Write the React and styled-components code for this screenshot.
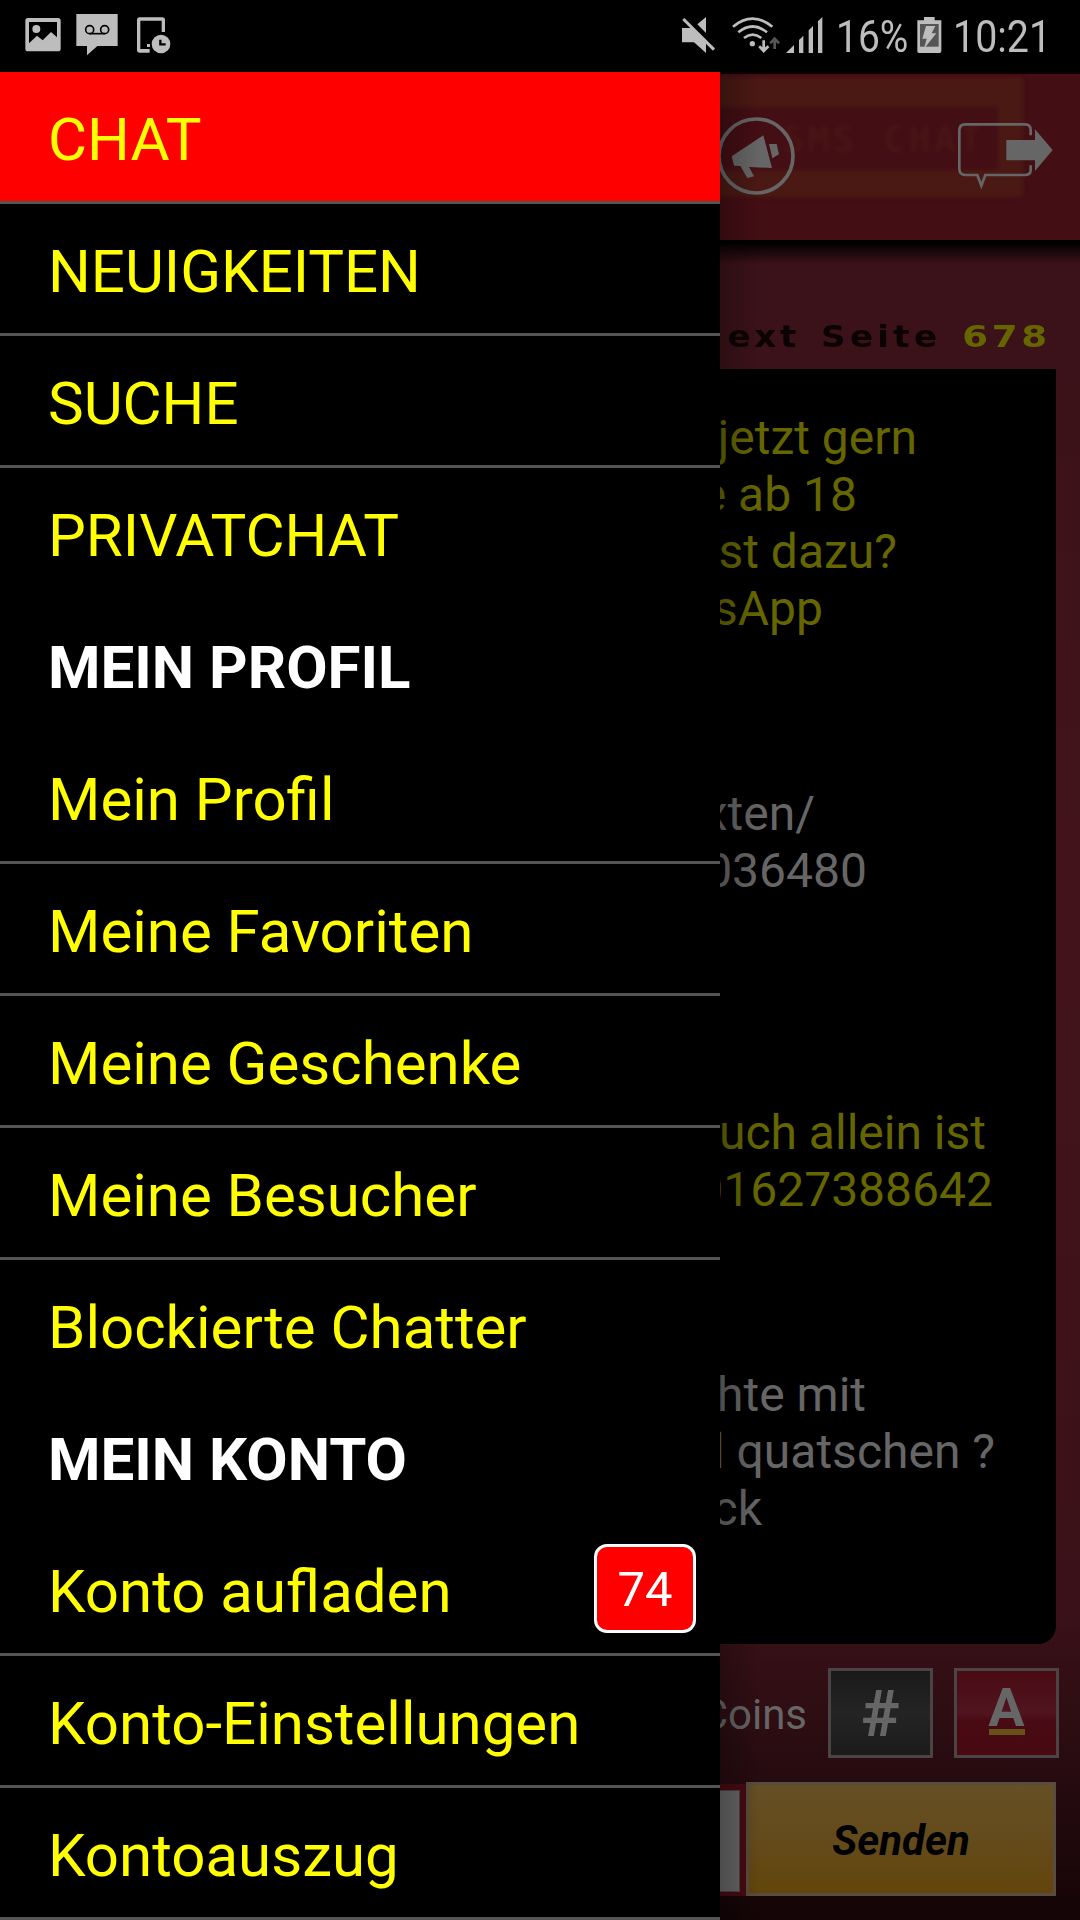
import React from 'react';
import styled, { createGlobalStyle } from 'styled-components';

const GlobalStyle = createGlobalStyle`
  body {
    margin: 0;
    background: #000;
    font-family: Roboto, sans-serif;
  }
  * {
    box-sizing: border-box;
  }
`;

//phone screen
const Screen = styled.div`
  position: relative;
  display: flex;
  flex-direction: column;
  width: 1080px;
  height: 1920px;
  overflow: hidden;
  background: #000;
`;

//android status bar
const StatusBar = styled.div`
  display: flex;
  justify-content: space-between;
  flex: none;
  height: 72px;
  background: #000;
`;

const StatusRight = styled.div`
  display: flex;
`;

const StatusText = styled.div`
  width: ${props => props.$width}px;
  line-height: 74px;
  font-size: 45px;
  color: #bdbdbd;
  white-space: nowrap;

  span {
    display: inline-block;
    transform: scaleX(${props => props.$squeeze});
    transform-origin: left;
  }
`;

//chat page behind the menu
const Page = styled.div`
  display: flex;
  flex-direction: column;
  flex: 1;
  background: linear-gradient(#3a1219 0, #3b1219 250px, #42131a 800px, #3f1219 1250px, #3a1118 1540px, #2b0d12 1660px, #1f080c 1770px, #130406 1848px);
`;

const Header = styled.div`
  position: relative;
  display: flex;
  align-items: flex-start;
  justify-content: flex-end;
  gap: 163px;
  flex: none;
  height: 168px;
  padding: 43px 27px 0 0;
  background: #430e14;
  border-top: 2px solid #0c0203;
`;

const LogoFrame = styled.div`
  position: absolute;
  left: 660px;
  top: 3px;
  width: 363px;
  height: 120px;
  padding: 30px 25px;
  background: #4b1914;
  filter: blur(2px);
`;

const LogoName = styled.div`
  height: 63px;
  padding-left: 97px;
  background: #430e14;
  color: #4a1515;
  font: bold 37px/65px 'DejaVu Sans Mono', monospace;
  letter-spacing: 3px;
  white-space: pre;
`;

const HeaderIcon = styled.svg`
  position: relative;
  flex: none;
  margin-top: ${props => props.$drop || 0}px;
`;

const HeaderShadow = styled.div`
  flex: none;
  height: 24px;
  background: linear-gradient(#000 10%, rgba(0, 0, 0, 0));
`;

const PageTitle = styled.div`
  display: flex;
  justify-content: flex-end;
  flex: none;
  height: 105px;
  padding: 39px 29px 0 0;
  color: #0b0203;
  font: bold 31px/66px 'DejaVu Sans', sans-serif;
`;

//wide letters, stretched to the left
const TitleWord = styled.span`
  margin-right: ${props => props.$gap || 0}px;
  letter-spacing: ${props => props.$spacing}px;
  color: ${props => props.$color || 'inherit'};
  transform: scaleX(${props => props.$stretch});
  transform-origin: right;
`;

const Messages = styled.div`
  display: flex;
  flex-direction: column;
  flex: none;
  height: 1275px;
  margin: 0 24px;
  padding-top: 40px;
  background: #000;
  border-radius: 0 0 18px 18px;
`;

const Message = styled.div`
  margin-bottom: ${props => props.$gap}px;
  color: ${props => (props.$own ? '#666' : '#660')};
  font-size: 48px;
  line-height: 57px;
  text-align: right;
`;

const Line = styled.div`
  padding-right: ${props => props.$end}px;
`;

const Tools = styled.div`
  display: flex;
  flex: none;
  justify-content: flex-end;
  height: 138px;
  padding: 24px 21px 0 0;
`;

const Coins = styled.div`
  color: #666;
  font-size: 42px;
  line-height: 93px;
`;

const ToolButton = styled.div`
  display: flex;
  flex-direction: column;
  align-items: center;
  width: 105px;
  height: 90px;
  margin-left: 21px;
  border: 3px solid #4c4345;
  background: ${props => (props.$red
    ? 'linear-gradient(#490a13, #50151f 50%, #480a13 60%, #480912)'
    : 'linear-gradient(#1a1a1a, #242424 50%, #1b1b1b)')};
  color: #666;
  font-size: ${props => props.$size}px;
  font-weight: 700;
  line-height: ${props => props.$line}px;
`;

const Underline = styled.div`
  width: 36px;
  height: 6px;
  margin-top: -16px;
  background: #66511a;
`;

const SendRow = styled.div`
  display: flex;
  flex: none;
  justify-content: flex-end;
  padding-right: 24px;
`;

const InputFrame = styled.div`
  width: 722px;
  height: 112px;
  margin-top: 2px;
  padding: 6px 6px 4px;
  background: #480a12;
`;

const Input = styled.div`
  height: 102px;
  background: #666;
  border: 1px solid #4c4345;
`;

const SendButton = styled.div`
  width: 310px;
  height: 114px;
  border: 3px solid #584c40;
  background: linear-gradient(#654f24, #644b1c 50%, #62450b);
  color: #000;
  font-size: 42px;
  font-style: italic;
  font-weight: 700;
  line-height: 112px;
  text-align: center;
`;

//menu that lies over the page
const Drawer = styled.div`
  position: absolute;
  left: 0;
  top: 72px;
  width: 720px;
  height: 1848px;
  background: #000;
`;

const DrawerShadow = styled.div`
  position: absolute;
  left: 720px;
  top: 72px;
  width: 40px;
  height: 1848px;
  background: linear-gradient(90deg, rgba(0, 0, 0, 0.25), rgba(0, 0, 0, 0));
`;

const MenuItem = styled.div`
  display: flex;
  align-items: center;
  justify-content: space-between;
  height: 132px;
  padding: 6px 24px 0 48px;
  border-bottom: 3px solid ${props => (props.$line ? '#545454' : 'transparent')};
  background: ${props => (props.$active ? '#f00' : '#000')};
  background-clip: padding-box;
  color: ${props => (props.$heading ? '#fff' : '#ff0')};
  font-size: 60px;
  font-weight: ${props => (props.$heading ? 700 : 400)};
`;

const Badge = styled.div`
  width: 102px;
  height: 89px;
  margin-top: -6px;
  border: 3px solid #fff;
  border-radius: 13px;
  background: #f00;
  color: #fff;
  font-size: 49px;
  line-height: 85px;
  text-align: center;
`;

const menu = [
  { text: 'CHAT', active: true, line: true },
  { text: 'NEUIGKEITEN', line: true },
  { text: 'SUCHE', line: true },
  { text: 'PRIVATCHAT' },
  { text: 'MEIN PROFIL', heading: true },
  { text: 'Mein Profil', line: true },
  { text: 'Meine Favoriten', line: true },
  { text: 'Meine Geschenke', line: true },
  { text: 'Meine Besucher', line: true },
  { text: 'Blockierte Chatter' },
  { text: 'MEIN KONTO', heading: true },
  { text: 'Konto aufladen', line: true, badge: 74 },
  { text: 'Konto-Einstellungen', line: true },
  { text: 'Kontoauszug', line: true },
];

//end is the free space to the right of the line
const messages = [
  { gap: 148, lines: [['jetzt gern', 139], ['e ab 18', 199], ['st dazu?', 159], ['sApp', 233]] },
  { own: true, gap: 205, lines: [['xten/', 241], ['036480', 189]] },
  { gap: 148, lines: [['uch allein ist', 70], ['01627388642', 63]] },
  { own: true, gap: 0, lines: [['hte mit', 190], ['l quatschen ?', 61], ['ck', 294]] },
];

//picture, voicemail and phone clock icons
const NoticeIcons = () => (
  <svg width="180" height="72" viewBox="0 0 540 216" fill="#bdbdbd">
    <path fillRule="evenodd" d="M84 54H174Q182 54 182 62V146Q182 154 174 154H84Q76 154 76 146V62Q76 54 84 54ZM87 66V130L111 107L128 121L153 96L171 112V66Z" />
    <circle cx="109" cy="87" r="12" />
    <path d="M229 42H353V138H292L261 166V138H229Z" />
    <g fill="none" stroke="#000" strokeWidth="5">
      <circle cx="269" cy="89" r="12" />
      <circle cx="314" cy="89" r="12" />
      <path d="M269 101H314" />
    </g>
    <path d="M419 52H487Q495 52 495 60V96H485V62H421V147H449V158H419Q411 158 411 150V60Q411 52 419 52Z" />
    <rect x="441" y="132" width="9" height="9" />
    <circle cx="483" cy="132" r="28" />
    <path d="M481 119V133H497" fill="none" stroke="#000" strokeWidth="7" />
  </svg>
);

//muted speaker, wifi and signal
const SignalIcons = () => (
  <svg width="176" height="72" viewBox="0 0 528 216" fill="#bdbdbd">
    <path d="M66 84H93L138 129V159L102 127H66ZM112 73L138 51V99Z" />
    <path d="M70 57L162 149" stroke="#bdbdbd" strokeWidth="9" />
    <g fill="none" stroke="#bdbdbd" strokeWidth="8">
      <path d="M219 80Q278 32 337 80" />
      <path d="M235 97Q278 62 321 97" />
      <path d="M252 114Q278 94 304 114" />
    </g>
    <circle cx="277" cy="131" r="8" />
    <path d="M307 121H315V142L323 136L328 142L311 159L295 142L300 136L307 142Z" />
    <path d="M340 147V127L333 133L328 127L344 110L360 127L355 133L348 127V147Z" fill="#555" />
    <path d="M378 159L402 135V159ZM417 159V120L430 107V159ZM446 159V91L459 78V159ZM474 159V64L487 51V159Z" />
  </svg>
);

const BatteryIcon = () => (
  <svg width="36" height="72" viewBox="0 0 108 216" fill="#bdbdbd">
    <path d="M21 51H53V61H73V154Q73 159 68 159H6Q1 159 1 154V61H21Z" />
    <rect x="9" y="72" width="56" height="68" fill="#555" />
    <path d="M27 78H55L44 100H58L21 146L29 116H16Z" />
  </svg>
);

const MegaphoneIcon = () => (
  <HeaderIcon width="78" height="78" viewBox="51 171 234 234" fill="#666">
    <circle cx="168" cy="288" r="111" fill="none" stroke="#666" strokeWidth="11" />
    <path d="M95 289L190 226L216 324L147 321L162 349L142 354L121 318L102 317Z" />
    <path d="M207 252H230L237 283L217 295Z" />
  </HeaderIcon>
);

const ExitIcon = () => (
  <HeaderIcon $drop={6} width="95" height="66" viewBox="774 188 285 198" fill="#666">
    <path d="M992 225V209Q992 192 975 192H796Q778 192 778 210V326Q778 344 796 344H832L844 376L856 344H975Q992 344 992 330V315" fill="none" stroke="#666" strokeWidth="8" />
    <path d="M919 239H1005V207L1058 269L1005 332V300H919Z" />
  </HeaderIcon>
);

const App = () => {
  return (
    <Screen>
      <GlobalStyle />
      <StatusBar>
        <NoticeIcons />
        <StatusRight>
          <SignalIcons />
          <StatusText $width={81} $squeeze={0.865}><span>16%</span></StatusText>
          <BatteryIcon />
          <StatusText $width={127} $squeeze={0.875}><span>10:21</span></StatusText>
        </StatusRight>
      </StatusBar>
      <Page>
        <Header>
          <LogoFrame>
            <LogoName>{'SMS CHAT'}</LogoName>
          </LogoFrame>
          <MegaphoneIcon />
          <ExitIcon />
        </Header>
        <HeaderShadow />
        <PageTitle>
          <TitleWord $spacing={3.4} $stretch={1.1} $gap={32}>ext</TitleWord>
          <TitleWord $spacing={3.9} $stretch={1.1} $gap={36}>Seite</TitleWord>
          <TitleWord $spacing={3} $stretch={1.2} $color="#660">678</TitleWord>
        </PageTitle>
        <Messages>
          {messages.map((message, i) => (
            <Message key={i} $own={message.own} $gap={message.gap}>
              {message.lines.map(([text, end]) => (
                <Line key={text} $end={end}>{text}</Line>
              ))}
            </Message>
          ))}
        </Messages>
        <Tools>
          <Coins>Coins</Coins>
          <ToolButton $size={65} $line={87}>#</ToolButton>
          <ToolButton $size={54} $line={74} $red>
            A
            <Underline />
          </ToolButton>
        </Tools>
        <SendRow>
          <InputFrame>
            <Input />
          </InputFrame>
          <SendButton>Senden</SendButton>
        </SendRow>
      </Page>
      <DrawerShadow />
      <Drawer>
        {/*one row for each menu entry*/}
        {menu.map((item) => (
          <MenuItem key={item.text} $active={item.active} $line={item.line} $heading={item.heading}>
            {item.text}
            {item.badge ? <Badge>{item.badge}</Badge> : null}
          </MenuItem>
        ))}
      </Drawer>
    </Screen>
  );
};

export default App;
